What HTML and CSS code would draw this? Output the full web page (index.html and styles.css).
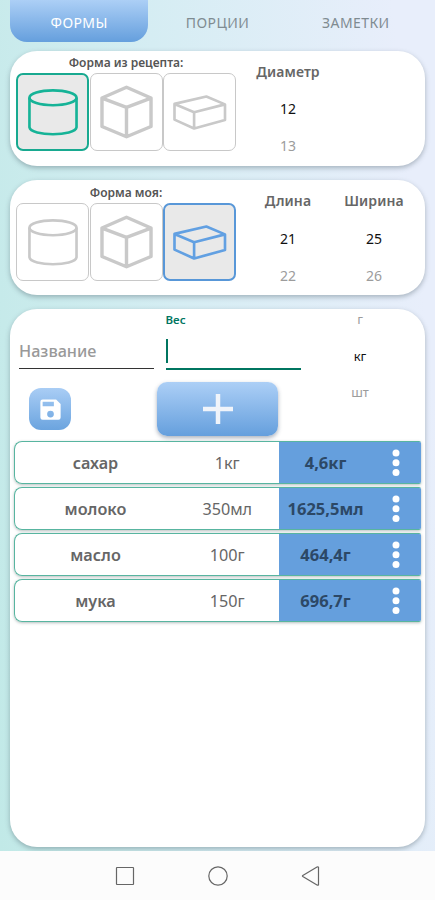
FILE: index.html
```html
<!DOCTYPE html>
<html lang="ru">
<head>
<meta charset="utf-8">
<title>Формы</title>
<link rel="stylesheet" href="styles.css">
</head>
<body>
<svg class="defs" aria-hidden="true">
  <symbol id="cylinder" viewBox="0 0 72 78"><ellipse cx="36.500" cy="24.300" rx="24" ry="7.600"/><path d="M12.500 24.300V54.300C14 63.800 59 63.800 60.500 54.300V24.300"/></symbol>
  <symbol id="cube" viewBox="0 0 72 78"><path d="M36 13.500L61 24.500V53.500L36 64L11 53.500V24.500ZM11 24.500L36 34L61 24.500M36 34V64"/></symbol>
  <symbol id="brick" viewBox="0 0 72 78"><path d="M10.500 30.500L43 23L62 31V47L30.500 55.500L10.500 46.500ZM10.500 30.500L30.500 39L62 31M30.500 39V55.500"/></symbol>
  <symbol id="dots" viewBox="0 0 8 28"><circle cx="4" cy="4" r="3.500"/><circle cx="4" cy="13.800" r="3.500"/><circle cx="4" cy="23.500" r="3.500"/></symbol>
</svg>
<div class="app">
  <nav class="tabs">
    <div class="tab tab-active">ФОРМЫ</div>
    <div class="tab">ПОРЦИИ</div>
    <div class="tab">ЗАМЕТКИ</div>
  </nav>
  <section class="card form-card">
    <div class="shapes">
      <h2>Форма из рецепта:</h2>
      <div class="shape-row">
        <div class="shape shape-green"><svg><use href="#cylinder"/></svg></div>
        <div class="shape heavy"><svg><use href="#cube"/></svg></div>
        <div class="shape"><svg><use href="#brick"/></svg></div>
      </div>
    </div>
    <div class="picker picker-single"><b>Диаметр</b><span>12</span><span class="faded">13</span></div>
  </section>
  <section class="card form-card form-own">
    <div class="shapes">
      <h2>Форма моя:</h2>
      <div class="shape-row">
        <div class="shape"><svg><use href="#cylinder"/></svg></div>
        <div class="shape heavy"><svg><use href="#cube"/></svg></div>
        <div class="shape shape-blue"><svg><use href="#brick"/></svg></div>
      </div>
    </div>
    <div class="picker picker-single"><b>Длина</b><span>21</span><span class="faded">22</span></div>
    <div class="picker picker-second"><b>Ширина</b><span>25</span><span class="faded">26</span></div>
  </section>
  <section class="card list-card">
    <div class="entry">
      <div class="field">Название</div>
      <div class="field field-active"><label>Вес</label><i class="caret"></i></div>
      <div class="units"><span class="faded">г</span><span>кг</span><span class="faded">шт</span></div>
    </div>
    <div class="actions">
      <div class="save"><svg viewBox="0 0 24 24"><path fill-rule="evenodd" d="M17 3H5a2 2 0 0 0-2 2v14a2 2 0 0 0 2 2h14a2 2 0 0 0 2-2V7zM12 19a3 3 0 1 1 0-6a3 3 0 0 1 0 6M15 9H5V5h10z"/></svg></div>
      <div class="add"><svg viewBox="0 0 30 30"><path d="M15 0V30M0 15H30"/></svg></div>
    </div>
    <div class="rows">
      <div class="row"><b>сахар</b><span class="amount">1кг</span><div class="result"><strong>4,6кг</strong><svg><use href="#dots"/></svg></div></div>
      <div class="row"><b>молоко</b><span class="amount">350мл</span><div class="result"><strong>1625,5мл</strong><svg><use href="#dots"/></svg></div></div>
      <div class="row"><b>масло</b><span class="amount">100г</span><div class="result"><strong>464,4г</strong><svg><use href="#dots"/></svg></div></div>
      <div class="row"><b>мука</b><span class="amount">150г</span><div class="result"><strong>696,7г</strong><svg><use href="#dots"/></svg></div></div>
    </div>
  </section>
</div>
<footer class="system">
  <svg viewBox="0 0 20 20"><rect x="1.500" y="1.500" width="17" height="17" rx=".5"/></svg>
  <svg viewBox="0 0 20 20"><circle cx="10" cy="10" r="9.200"/></svg>
  <svg viewBox="0 0 20 20"><path d="M17.500 1.200V18.800Q17 19.500 16 19L1.800 10.600Q1 10 1.800 9.400L16 1Q17 .5 17.500 1.200Z"/></svg>
</footer>
</body>
</html>
```

FILE: styles.css
```css
* { box-sizing: border-box; }
body { margin: 0; width: 435px; height: 900px; overflow: hidden; font-family: "Noto Sans", sans-serif; color: #666; }
.defs { display: block; width: 0; height: 0; }
.app { height: 851px; padding: 0 10px; overflow: hidden; background: linear-gradient(84deg, #c1e9e7 0%, #d5edf3 45%, #e8eefb 92%); }
.tabs { display: flex; height: 42px; margin-bottom: 8.600px; }
.tab { flex: 1; display: flex; align-items: center; justify-content: center; padding-top: 3px; font-size: 14px; letter-spacing: .4px; color: #7f8b91; }
.tab-active { color: #fff; background: linear-gradient(#accff6, #659fdd); border-radius: 0 0 17px 17px; }
.card { background: #fff; border-radius: 27px; box-shadow: 0 2px 5px rgba(50, 70, 80, .35); }
.form-card { display: flex; height: 115px; margin-bottom: 14.400px; padding-left: 6px; }
.form-own { padding-top: 1px; }
.form-own .picker { padding-top: 10.500px; }
.shapes { width: 220px; }
h2 { height: 22px; margin: 0; padding-top: 3px; font-size: 12px; line-height: 18px; font-weight: 600; text-align: center; color: #555; }
.shape-row { display: flex; gap: .5px; }
.shape { width: 73px; height: 78.500px; border: 1px solid #c8c8c8; border-radius: 7px; fill: none; stroke: #c9c9c9; stroke-width: 2.700; stroke-linejoin: round; }
.shape svg { display: block; width: 71px; height: 76.500px; }
.heavy { stroke-width: 3.500; }
.shape-green { border: 2px solid #18a990; background: #e9e9e9; stroke: #16b397; }
.shape-blue { border: 2px solid #5897d8; background: #e9e9e9; stroke: #62a0e2; }
.shape-green svg, .shape-blue svg { margin: -1px; }
.picker { display: flex; flex-direction: column; align-items: center; padding-top: 11px; font-size: 14px; line-height: 20px; color: #111; }
.picker-single { width: 84px; margin-left: 10px; }
.picker-second { width: 88px; }
.picker b { margin-bottom: 17.500px; font-weight: 600; color: #666; letter-spacing: .1px; }
.picker span { margin-bottom: 17px; }
.picker .faded, .units .faded { color: #9c9c9c; }
.list-card { height: 537.500px; padding: 0 4.500px 0 4px; }
.entry { display: flex; height: 73px; padding-left: 5px; }
.field { width: 135px; height: 59.500px; margin-right: 11.500px; padding-top: 31px; border-bottom: 1px solid #333; font-size: 16.200px; line-height: 23px; font-weight: 500; color: #999; }
.field-active { height: 61px; margin-right: 0; padding-top: 0; border-bottom: 2px solid #007560; }
.field label { display: block; height: 30px; padding-top: 1px; font-size: 11.500px; line-height: 20px; font-weight: 600; color: #007560; }
.caret { display: block; width: 2px; height: 24px; background: #007560; }
.units { display: flex; flex-direction: column; align-items: center; width: 119px; padding-top: 1px; font-size: 13px; line-height: 20px; color: #111; }
.units span { margin-bottom: 16.200px; transform: translateY(-1px); }
.actions { display: flex; height: 59px; padding-left: 15px; }
.save { display: grid; place-items: center; width: 42px; height: 42px; margin: 6px 86px 0 0; border-radius: 12px; background: linear-gradient(#a9cdf5, #6ba4df); }
.save svg { width: 27px; height: 27px; fill: #fff; }
.add { display: grid; place-items: center; width: 121px; height: 54px; border-radius: 10px; background: linear-gradient(#accff6, #659fdd); box-shadow: 0 2px 4px rgba(40, 60, 90, .4); }
.add svg { width: 30px; height: 30px; stroke: #f0f4fa; stroke-width: 4.500; }
.rows { display: grid; gap: 3.500px; }
.row { display: flex; align-items: center; height: 42.500px; border: 1px solid #58b5a0; border-right: 0; border-radius: 8px 2px 2px 8px; box-shadow: 0 1px 3px rgba(40, 70, 70, .35); font-size: 16.200px; overflow: hidden; }
.row b { width: 161px; padding-top: 1px; font-weight: 600; text-align: center; }
.amount { width: 102.500px; padding-top: 1px; text-align: center; font-weight: 400; }
.result { display: flex; flex: 1; align-items: center; align-self: stretch; background: #659fdd; color: #2c4866; }
.result strong { width: 94px; font-size: 16.500px; font-weight: 700; text-align: center; }
.result svg { width: 8px; height: 28px; margin-left: 19.500px; fill: #fff; }
.system { display: flex; align-items: center; justify-content: center; gap: 73px; height: 49px; background: #fcfcfc; }
.system svg { width: 20px; height: 20px; fill: none; stroke: #666; stroke-width: 1.200; }
```
